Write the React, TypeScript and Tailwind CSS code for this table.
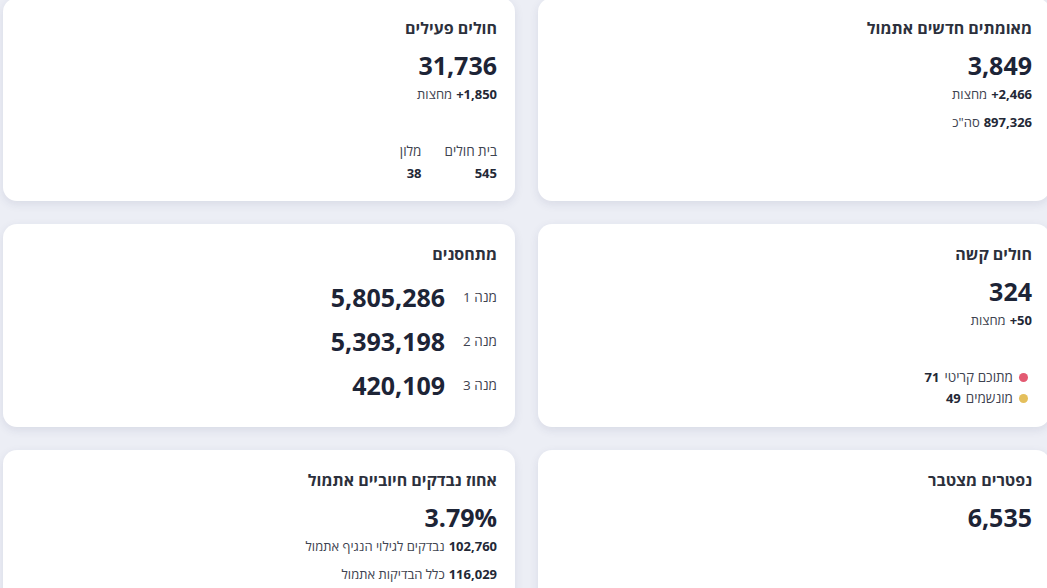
import React from "react"

const font = { fontFamily: '"Open Sans", "Noto Sans", "DejaVu Sans", sans-serif' }

function Card({ children }: { children: React.ReactNode }) {
    return (
        <div className="bg-white rounded-[14px] shadow-[0_3px_10px_rgba(40,50,100,0.10)] p-[18px] flex flex-col overflow-hidden">
            {children}
        </div>
    )
}

function Title({ children }: { children: React.ReactNode }) {
    return <h3 className="text-[16px] leading-[24px] font-bold text-[#2c303c]">{children}</h3>
}

function BigNumber({ children }: { children: React.ReactNode }) {
    return (
        <div dir="ltr" className="mt-[8px] text-right text-[25px] leading-[34px] font-bold text-[#1d2436]">
            {children}
        </div>
    )
}

function SubLine({ value, label, className = "" }: { value: string; label: string; className?: string }) {
    return (
        <div className={"flex items-center gap-[4px] text-[13px] leading-[20px] text-[#3e4350] " + className}>
            <span dir="ltr" className="font-bold text-[#232836]">{value}</span>
            <span>{label}</span>
        </div>
    )
}

function Dot({ color, label, value }: { color: string; label: string; value: string }) {
    return (
        <div className="flex items-center pr-[4px] text-[13px] leading-[21px] text-[#3e4350]">
            <span className={"w-[9px] h-[9px] rounded-full ml-[6px] " + color} />
            <span className="ml-[5px] text-[13.5px]">{label}</span>
            <span className="font-bold text-[#232836]">{value}</span>
        </div>
    )
}

export default function App() {
    const doses = [
        { label: "מנה 1", value: "5,805,286" },
        { label: "מנה 2", value: "5,393,198" },
        { label: "מנה 3", value: "420,109" },
    ]

    return (
        <div style={font} className="w-[1047px] h-[588px] overflow-hidden bg-[#eceef5]">
            <div dir="rtl" className="ml-[3px] -mt-[2px] w-[1047px] grid grid-cols-[512px_512px] auto-rows-[203px] gap-x-[23px] gap-y-[23px]">
                {/* confirmed yesterday */}
                <Card>
                    <Title>מאומתים חדשים אתמול</Title>
                    <BigNumber>3,849</BigNumber>
                    <SubLine value="+2,466" label="מחצות" className="mt-[2px]" />
                    <SubLine value="897,326" label='סה"כ' className="mt-[8px]" />
                </Card>

                {/* active patients */}
                <Card>
                    <Title>חולים פעילים</Title>
                    <BigNumber>31,736</BigNumber>
                    <SubLine value="+1,850" label="מחצות" className="mt-[2px]" />
                    <div className="mt-auto flex gap-[23px]">
                        <div className="flex flex-col gap-[2px]">
                            <span className="text-[13.5px] leading-[20px] text-[#3e4350]">בית חולים</span>
                            <span className="text-[13px] leading-[20px] font-bold text-[#232836]">545</span>
                        </div>
                        <div className="flex flex-col gap-[2px]">
                            <span className="text-[13.5px] leading-[20px] text-[#3e4350]">מלון</span>
                            <span className="text-[13px] leading-[20px] font-bold text-[#232836]">38</span>
                        </div>
                    </div>
                </Card>

                {/* severe */}
                <Card>
                    <Title>חולים קשה</Title>
                    <BigNumber>324</BigNumber>
                    <SubLine value="+50" label="מחצות" className="mt-[2px]" />
                    <div className="mt-auto flex flex-col">
                        <Dot color="bg-[#e35a72]" label="מתוכם קריטי" value="71" />
                        <Dot color="bg-[#e4bf5c]" label="מונשמים" value="49" />
                    </div>
                </Card>

                {/* vaccinated */}
                <Card>
                    <Title>מתחסנים</Title>
                    <div className="mt-[14px] flex flex-col gap-[10px]">
                        {doses.map((d) => (
                            <div key={d.label} className="flex items-center gap-[18px]">
                                <span className="text-[13.5px] text-[#3e4350]">{d.label}</span>
                                <span className="text-[25px] leading-[34px] font-bold text-[#1d2436]">{d.value}</span>
                            </div>
                        ))}
                    </div>
                </Card>

                {/* deceased */}
                <Card>
                    <Title>נפטרים מצטבר</Title>
                    <BigNumber>6,535</BigNumber>
                </Card>

                {/* positive rate */}
                <Card>
                    <Title>אחוז נבדקים חיוביים אתמול</Title>
                    <BigNumber>3.79%</BigNumber>
                    <SubLine value="102,760" label="נבדקים לגילוי הנגיף אתמול" className="mt-[2px]" />
                    <SubLine value="116,029" label="כלל הבדיקות אתמול" className="mt-[8px]" />
                </Card>
            </div>
        </div>
    )
}
